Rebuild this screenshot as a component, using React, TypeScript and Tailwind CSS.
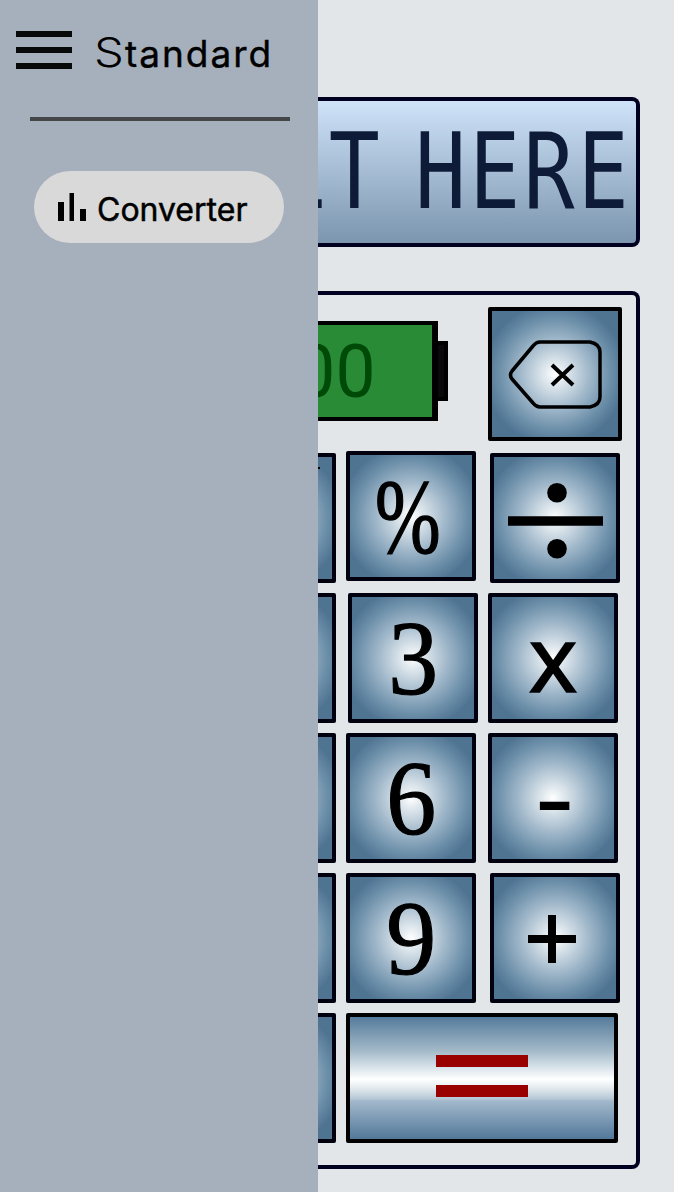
import React from "react";
import clsx from "clsx";

type KeyProps = { className?: string; children?: React.ReactNode };

function Key({ className, children }: KeyProps) {
  return (
    <button
      className={clsx(
        "flex size-[130px] shrink-0 items-center justify-center overflow-hidden rounded-[2px] border-4 border-[#00000f] bg-[radial-gradient(circle_at_center,#ffffff_0px,#dde6ec_12px,#9db5c8_36px,#6c8fa9_56px,#4f7492_71px)] text-black",
        className,
      )}
    >
      {children}
    </button>
  );
}

function Digit({ children }: { children: React.ReactNode }) {
  return (
    <span className="mt-[1px] scale-x-[0.95] font-['Liberation_Serif',serif] text-[105px] leading-[122px] [-webkit-text-stroke:1.2px_black]">
      {children}
    </span>
  );
}

function Sidebar() {
  return (
    <aside className="h-full w-[318px] shrink-0 bg-[#a6b0bc]">
      <header className="flex h-[104px] items-start pl-4">
        <button className="mt-[31px] flex w-14 flex-col gap-[10px]" aria-label="Menu">
          <span className="h-[6px] bg-[#080a0a]" />
          <span className="h-[6px] bg-[#080a0a]" />
          <span className="h-[6px] bg-[#080a0a]" />
        </button>
        <h1 className="ml-[22px] mt-[25px] whitespace-nowrap font-[Inter,sans-serif] text-[37px] leading-[54px] tracking-[2px] [-webkit-text-stroke:0.4px_black]">
          <span className="mr-[3px] inline-block origin-left scale-x-[1.15] text-[41px] font-light [-webkit-text-stroke:0px]">S</span>tandard
        </h1>
      </header>
      <div className="ml-[30px] mt-[13px] h-1 w-[260px] bg-[#444648]" />
      <button className="ml-[34px] mt-[50px] flex h-[72px] w-[250px] items-start rounded-full bg-[#d9d9d9]">
        <svg className="ml-6 mt-[22px] shrink-0" width="28" height="28" viewBox="0 0 28 28">
          <path d="M0 9h6v19H0zM11.5 0h4.5v28h-4.5zM22 16h6v12h-6z" />
        </svg>
        <span className="ml-[11px] mt-[18px] font-[Inter,sans-serif] text-[32px] leading-[42px] [-webkit-text-stroke:0.5px_black]">
          Converter
        </span>
      </button>
    </aside>
  );
}

function Display() {
  return (
    <div className="flex h-[150px] w-[322px] items-center justify-end overflow-hidden rounded-r-lg border-4 border-l-0 border-[#000020] bg-linear-to-b from-[#cfe3f9] to-[#7c96af]">
      <span className="mr-[4px] shrink-0 origin-right scale-x-[0.80] whitespace-nowrap font-['DejaVu_Sans_Mono',monospace] text-[106px] leading-[120px] tracking-[4px] text-[#0d1b38] [word-spacing:-28px]">
        RESULT HERE
      </span>
    </div>
  );
}

function Battery() {
  return (
    <div className="mt-[14px] flex shrink-0 items-start">
      <div className="flex h-[100px] w-[120px] items-center justify-end overflow-hidden border-y-4 border-r-[6px] border-black bg-[#298b35]">
        <span className="mr-[57px] shrink-0 origin-right scale-x-[0.95] font-[Roboto,sans-serif] text-[75px] leading-[92px] text-[#004a08]">
          100
        </span>
      </div>
      <div className="mt-5 h-[60px] w-[10px] border-y-4 border-r-4 border-black bg-[#0b080c]" />
    </div>
  );
}

export default function App() {
  return (
    <div className="flex h-[1192px] w-[674px] overflow-hidden bg-[#e2e6e9]">
      <Sidebar />
      <main className="min-w-0 flex-1 overflow-hidden pt-[97px]">
        <Display />
        <section className="mt-11 h-[878px] w-[322px] rounded-r-lg border-4 border-l-0 border-[#000020] pt-3">
          <div className="flex h-[144px] items-start">
            <Battery />
            <Key className="ml-10 size-[134px] border-black">
              <svg className="mt-[2px]" width="94" height="70" viewBox="0 0 94 70" fill="none" stroke="black" strokeWidth="4">
                <path d="M32 2H82Q92 4 92 12V57Q92 65 82 67H32Q28 67 25 63L4 39Q1 35 4 31L25 6Q28 2 32 2Z" strokeWidth="3.5" strokeLinejoin="round" />
                <path d="M44 25L65 45M65 25L44 45" strokeWidth="4" />
              </svg>
            </Key>
          </div>
          <div className="flex h-[142px] items-start">
            <Key className="ml-[-112px] mt-[2px]">
              <svg width="122" height="122" viewBox="0 0 122 122" fill="none" stroke="black" strokeWidth="2">
                <path d="M30 65L42 60L58 98L72 11H110" />
              </svg>
            </Key>
            <Key className="ml-[10px]">
              <span className="mr-[7px] mt-[3px] scale-x-[0.75] font-['Liberation_Serif',serif] text-[105px] leading-[122px] [-webkit-text-stroke:1.5px_black]">%</span>
            </Key>
            <Key className="ml-[14px] mt-[2px]">
              <svg className="ml-[2px] mt-[5px] shrink-0" width="96" height="76" viewBox="0 0 96 76">
                <circle cx="49" cy="9.8" r="9.8" />
                <path d="M0 33.3h95v9.4H0z" />
                <circle cx="49" cy="65.8" r="9.8" />
              </svg>
            </Key>
          </div>
          <div className="flex h-[140px] items-start">
            <Key className="ml-[-112px]"><Digit>2</Digit></Key>
            <Key className="ml-3"><Digit>3</Digit></Key>
            <Key className="ml-[10px]">
              <span className="mt-[-2px] font-['Noto_Sans',sans-serif] text-[92px] leading-[122px] [-webkit-text-stroke:1.5px_black]">x</span>
            </Key>
          </div>
          <div className="flex h-[140px] items-start">
            <Key className="ml-[-112px]"><Digit>5</Digit></Key>
            <Key className="ml-[10px]"><Digit>6</Digit></Key>
            <Key className="ml-3">
              <span className="mr-[-2px] scale-x-[1.15] font-['Liberation_Sans',sans-serif] text-[105px] leading-[122px]">-</span>
            </Key>
          </div>
          <div className="flex h-[140px] items-start">
            <Key className="ml-[-112px]"><Digit>8</Digit></Key>
            <Key className="ml-[10px]"><Digit>9</Digit></Key>
            <Key className="ml-[14px]">
              <svg className="mr-[6px] mt-[2px] shrink-0" width="48" height="48" viewBox="0 0 48 48">
                <path d="M20 0h8v20h20v8H28v20h-8V28H0v-8h20z" />
              </svg>
            </Key>
          </div>
          <div className="flex items-start">
            <Key className="ml-[-112px] bg-[radial-gradient(circle_at_center,#ffffff_0px,#8facc2_30px,#6c8fa9_48px,#4f7492_62px)]"><Digit>.</Digit></Key>
            <button
              aria-label="Equals"
              className="ml-[10px] flex h-[130px] w-[272px] shrink-0 flex-col items-center gap-[18px] rounded-[2px] border-4 border-black bg-[linear-gradient(to_bottom,#557b9b_0%,#a4bac9_28%,#d7e2e9_41%,#ffffff_51%,#e4ebef_58%,#b6c8d6_67%,#a1b8cb_69%,#52789a_100%)] pt-[38px]"
            >
              <span className="h-3 w-[92px] bg-[#990000]" />
              <span className="h-3 w-[92px] bg-[#990000]" />
            </button>
          </div>
        </section>
      </main>
    </div>
  );
}
